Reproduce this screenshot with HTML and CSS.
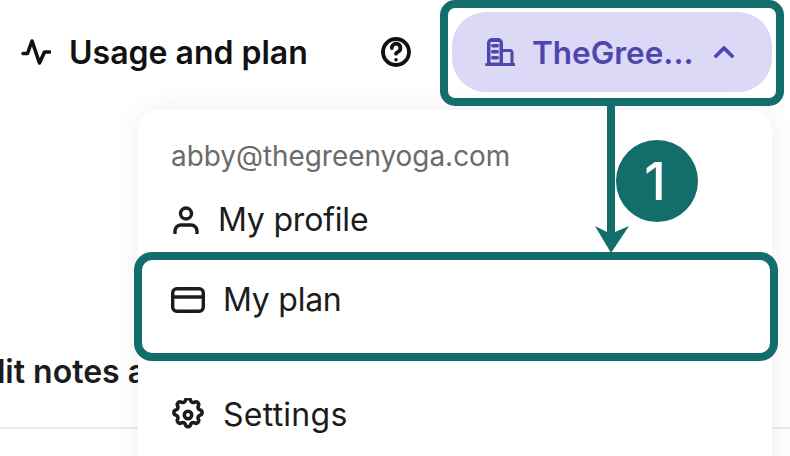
FILE: index.html
```html
<!DOCTYPE html>
<html lang="en">
<head>
<meta charset="utf-8">
<title>Usage and plan</title>
<link rel="stylesheet" href="styles.css">
</head>
<body>
<div class="page">
  <header class="topbar">
    <a class="usage">
      <svg class="ico-activity" viewBox="0 0 30 28" fill="none" stroke="#111" stroke-width="3.6" stroke-linecap="round" stroke-linejoin="round"><path d="M2 15.5h4.5L11 3l7.500 22L23.500 14H28.500"/></svg>
      <span class="usage-label">Usage and plan</span>
    </a>
    <svg class="ico-help" viewBox="0 0 30 30" fill="none" stroke="#111" stroke-width="3.8" stroke-linecap="round" stroke-linejoin="round"><circle cx="15" cy="15" r="13"/><path d="M10.800 11a4.300 4.300 0 1 1 6.500 3.700c-1.400.8-2.300 1.100-2.300 2"/><path d="M15 22.600v.1" stroke-width="3.400"/></svg>
    <button class="org">
      <svg class="ico-org" viewBox="0 0 30 28"><path fill="#4f46ad" fill-rule="evenodd" d="M2 25V5A5 5 0 0 1 7 0h6a5 5 0 0 1 5 5v6h6.500a4 4 0 0 1 4 4V25h.5a1.500 1.500 0 0 1 0 3H1.500a1.500 1.500 0 0 1 0-3zM5.500 24.500h9V4h-9zM18 25h7.500V14H18z"/><rect x="6" y="6" width="8" height="3.400" rx="1.600" fill="#4f46ad"/><rect x="6" y="12" width="8" height="3.400" rx="1.600" fill="#4f46ad"/><rect x="6" y="18" width="8" height="3.400" rx="1.600" fill="#4f46ad"/></svg>
      <span class="org-name">TheGree...</span>
      <svg class="ico-chev" viewBox="0 0 20 12" fill="none" stroke="#4f46ad" stroke-width="3.8" stroke-linecap="round" stroke-linejoin="round"><path d="M2 10l8-8 8 8"/></svg>
    </button>
  </header>

  <section class="content">
    <h2 class="notes">Edit notes and more</h2>
    <div class="rule"></div>
  </section>

  <nav class="menu">
    <div class="email">abby@thegreenyoga.com</div>
    <a class="item item-profile">
      <svg class="ico-person" viewBox="0 0 26 28" fill="none" stroke="#1c1c1c" stroke-width="3.4" stroke-linecap="round" stroke-linejoin="round"><circle cx="13" cy="7.500" r="5.500"/><path d="M2 27v-2a6 6 0 0 1 6-6h10a6 6 0 0 1 6 6v2"/></svg>
      <span>My profile</span>
    </a>
    <a class="item item-plan">
      <svg class="ico-card" viewBox="0 0 34 26" fill="none" stroke="#1c1c1c" stroke-width="3.4" stroke-linecap="round" stroke-linejoin="round"><rect x="1.700" y="1.700" width="30.600" height="22.600" rx="4"/><path d="M1.700 10h30.600"/></svg>
      <span>My plan</span>
    </a>
    <a class="item item-settings">
      <svg class="ico-gear" viewBox="1 1 22 22" fill="none" stroke="#1c1c1c" stroke-width="2.300" stroke-linecap="round" stroke-linejoin="round"><path d="M10.300 2.600c.4-1.800 3-1.800 3.400 0a1.800 1.800 0 0 0 2.600 1.100c1.500-.9 3.300.9 2.400 2.400a1.800 1.800 0 0 0 1.100 2.600c1.800.4 1.800 3 0 3.400a1.800 1.800 0 0 0-1.100 2.600c.9 1.500-.9 3.300-2.400 2.400a1.800 1.800 0 0 0-2.600 1.100c-.4 1.800-3 1.800-3.400 0a1.800 1.800 0 0 0-2.600-1.100c-1.500.9-3.300-.9-2.400-2.400a1.800 1.800 0 0 0-1.100-2.600c-1.800-.4-1.800-3 0-3.400a1.800 1.800 0 0 0 1.100-2.600c-.9-1.500.9-3.300 2.400-2.400a1.800 1.800 0 0 0 2.600-1.100z"/><circle cx="12" cy="12" r="2.400"/></svg>
      <span>Settings</span>
    </a>
  </nav>

  <div class="mark mark-org"></div>
  <div class="mark mark-plan"></div>
  <svg class="arrow" viewBox="0 0 36 148"><path fill="#126d6b" d="M14 0h8v126l14-6L18 147 2 120l12 6z"/></svg>
  <div class="badge">1</div>
</div>
</body>
</html>
```
FILE: styles.css
```css
* { box-sizing: border-box; }
html, body { margin: 0; padding: 0; background: #fff; }
body { font-family: Inter, "Liberation Sans", sans-serif; color: #111; }
.page { position: relative; width: 790px; height: 456px; overflow: hidden; }

.topbar { display: flex; align-items: center; height: 104px; padding: 0 18px 0 21px; }
.usage { display: flex; align-items: center; gap: 18px; font-size: 32px; font-weight: 600; flex: none; width: 285px; white-space: nowrap; }
.ico-activity { width: 30px; height: 28px; flex: none; }
.ico-help { width: 30px; height: 30px; margin-left: 75px; flex: none; }
.org { display: flex; align-items: center; width: 320px; height: 80px; margin-left: 41px; padding: 0 38px 0 33px; border: 0; border-radius: 34px; background: #dcd9f7; font-family: inherit; color: #4f46ad; flex: none; }
.ico-org { width: 30px; height: 28px; flex: none; }
.org-name { margin-left: 17px; font-size: 31.5px; font-weight: 600; }
.ico-chev { width: 20px; height: 12px; flex: none; margin-left: auto; }

.content { padding-top: 250px; }
.notes { margin: 0 0 0 -34px; font-size: 32px; line-height: 36px; font-weight: 600; color: #1c1c1c; white-space: nowrap; }
.rule { height: 2px; margin-top: 37px; background: #ececec; }

.menu { position: absolute; left: 138px; top: 110px; width: 634px; height: 400px; padding: 29px 33px; background: #fff; border-radius: 20px; box-shadow: 0 0 28px rgba(0,0,0,.07); }
.email { font-size: 27.9px; line-height: 34px; color: #6b6b6b; }
.item { display: flex; align-items: center; font-size: 32px; line-height: 38px; color: #1c1c1c; }
.item-profile { gap: 19px; margin-top: 28px; padding-left: 2px; letter-spacing: -0.2px; }
.item-plan { gap: 18px; margin-top: 42px; letter-spacing: -0.25px; }
.item-settings { gap: 18px; margin-top: 77px; letter-spacing: 0.25px; }
.ico-person { width: 26px; height: 28px; }
.ico-card { width: 34px; height: 26px; }
.ico-gear { width: 34px; height: 34px; }

.mark { position: absolute; border: 8px solid #126d6b; }
.mark-org { left: 440px; top: 0; width: 344px; height: 106px; border-radius: 15px; }
.mark-plan { left: 134px; top: 252px; width: 644px; height: 109px; border-radius: 18px; }
.arrow { position: absolute; left: 593px; top: 106px; width: 36px; height: 148px; }
.badge { position: absolute; left: 616px; top: 140px; width: 82px; height: 82px; padding-right: 4px; display: flex; align-items: center; justify-content: center; border-radius: 50%; background: #126d6b; color: #fff; font-size: 52px; font-weight: 500; }
```
